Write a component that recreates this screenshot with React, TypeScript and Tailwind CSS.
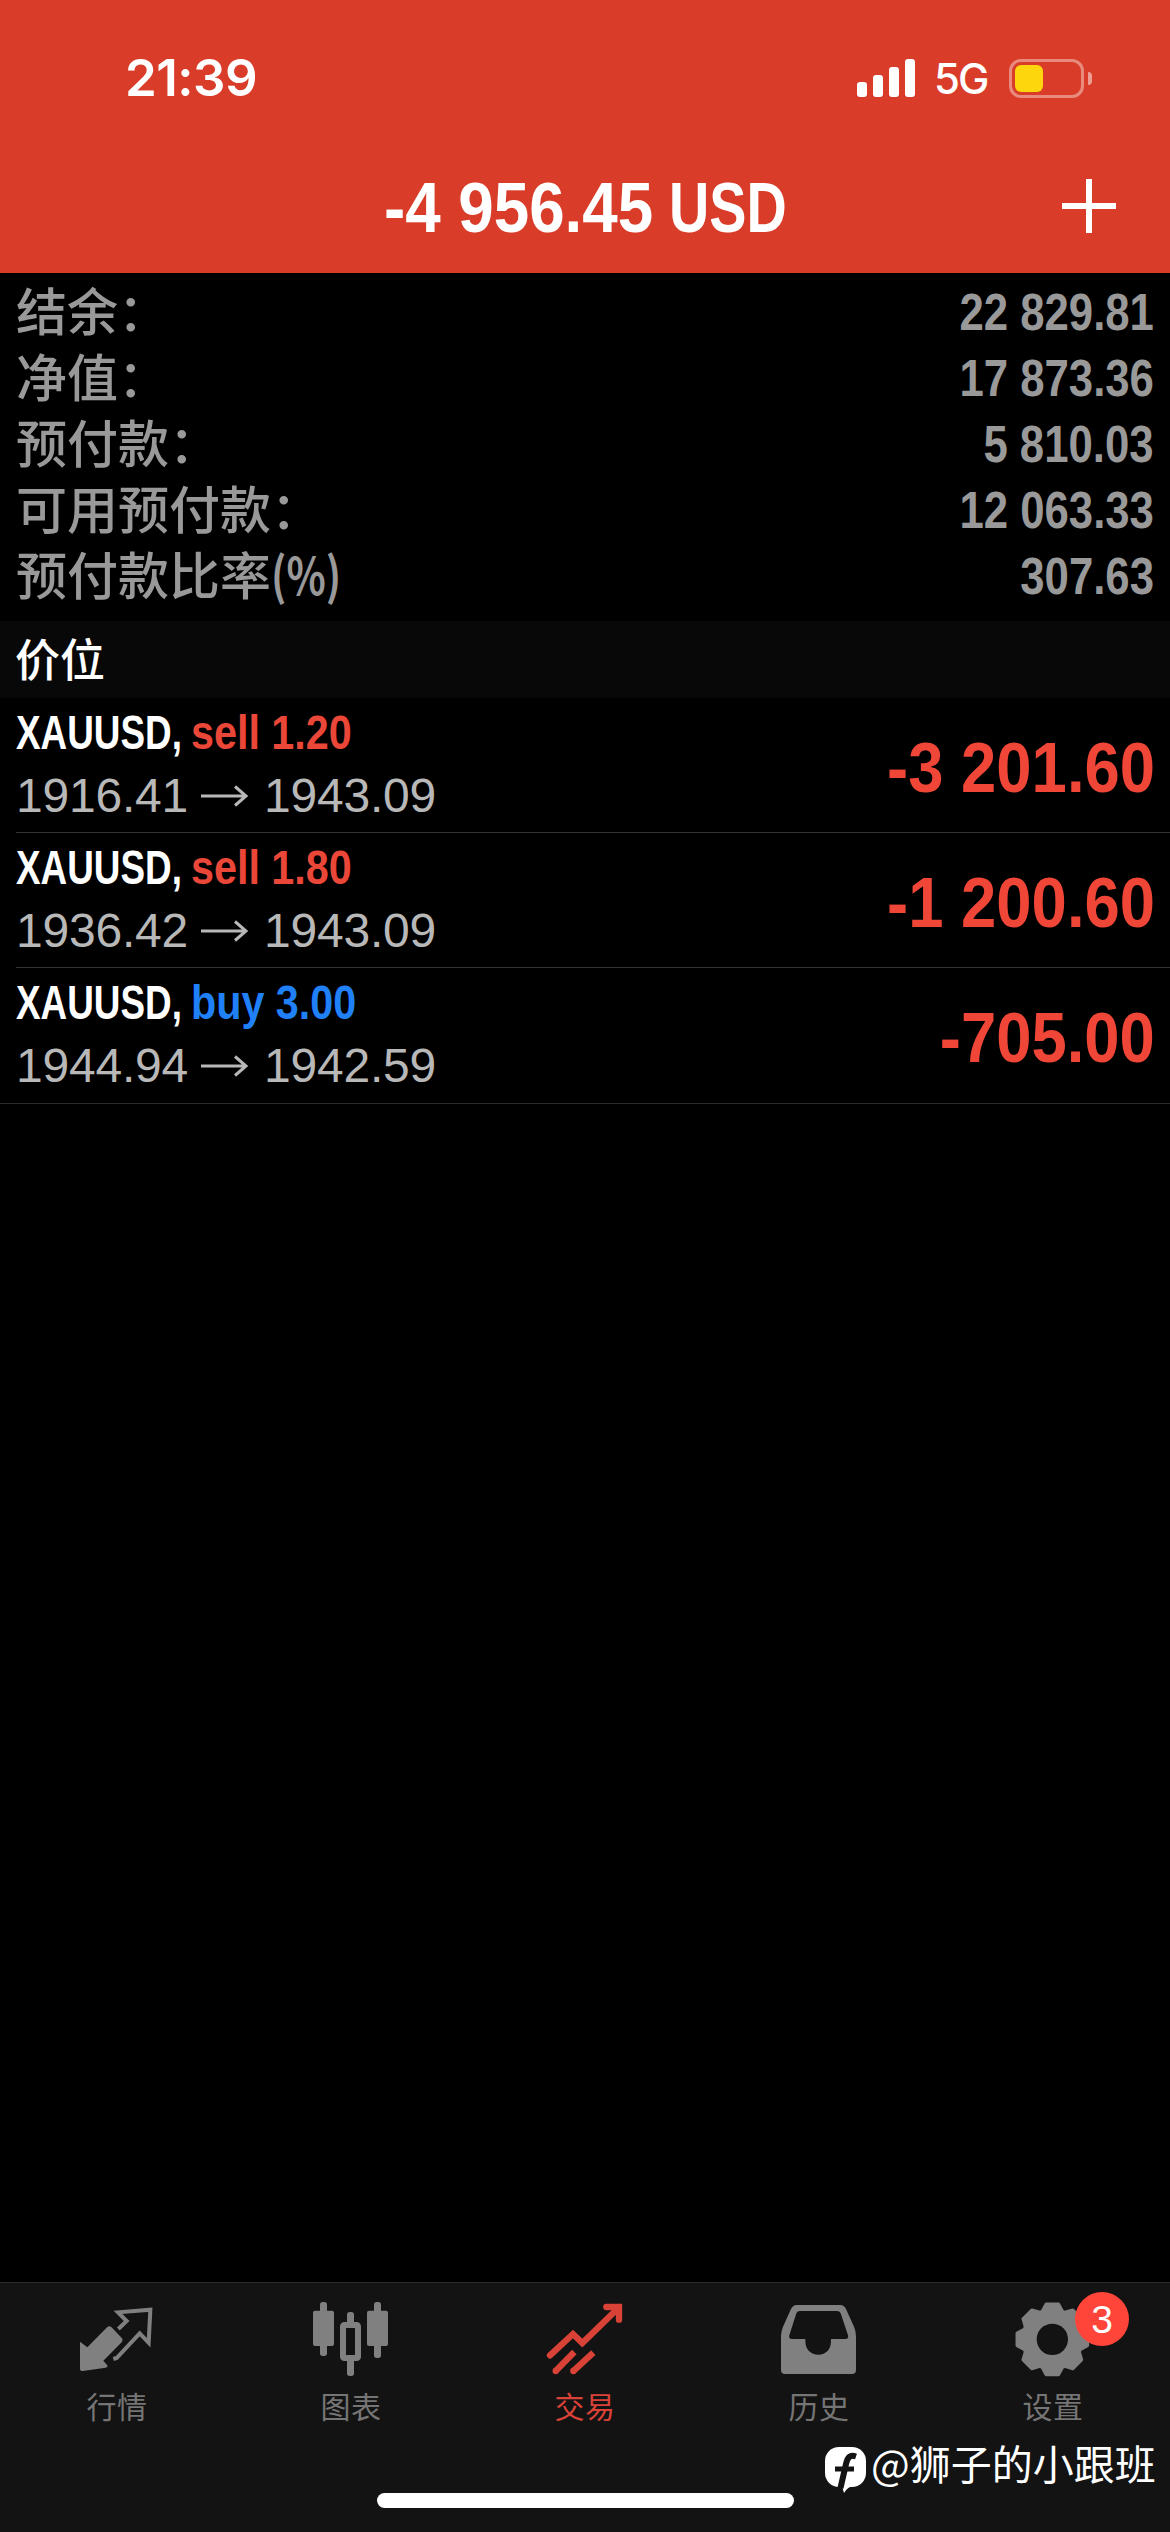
import type { ReactNode } from 'react';

const balances = [
  ['结余：', '22 829.81'],
  ['净值：', '17 873.36'],
  ['预付款：', '5 810.03'],
  ['可用预付款：', '12 063.33'],
  ['预付款比率', '307.63'],
];

const positions = [
  { side: 'sell 1.20', from: '1916.41', to: '1943.09', profit: '-3 201.60', buy: false },
  { side: 'sell 1.80', from: '1936.42', to: '1943.09', profit: '-1 200.60', buy: false },
  { side: 'buy 3.00', from: '1944.94', to: '1942.59', profit: '-705.00', buy: true },
];

const cjk = "font-['Noto_Sans_CJK_SC',sans-serif]";

function StatusBar() {
  return (
    <div className="flex h-[140px] items-start justify-between pl-[125px] pr-[78px] pt-[48px] text-white">
      <span className="block h-[60px] font-['Inter',sans-serif] text-[51px] font-semibold leading-[60px] tracking-[-0.5px]">21:39</span>
      <div className="flex h-[60px] items-center">
        <svg className="h-[38px] w-[58px]" viewBox="0 0 58 38" fill="#fff">
          <rect x="0" y="23" width="10" height="15" rx="3" />
          <rect x="16" y="16" width="10" height="22" rx="3" />
          <rect x="32" y="8" width="10" height="30" rx="3" />
          <rect x="48" y="0" width="10" height="38" rx="3" />
        </svg>
        <span className="ml-[19px] w-[75px] pt-[2px] font-['Inter',sans-serif] text-[42px] font-medium leading-[60px] tracking-[-2px]">5G</span>
        <div className="flex h-[39px] w-[75px] items-center rounded-[12px] border-[3px] border-white/40 pl-[3px]">
          <div className="h-[27px] w-[28px] rounded-[6px] bg-[#fdd60d]" />
        </div>
        <div className="ml-[4px] h-[13px] w-[4px] rounded-r-full bg-white/50" />
      </div>
    </div>
  );
}

function Header() {
  return (
    <header className="h-[273px] bg-[#d93d29]">
      <StatusBar />
      <div className="relative flex h-[133px] justify-center pt-[28px] font-['Liberation_Sans',sans-serif] text-[71px] font-bold leading-[80px] text-white">
        <h1 className="flex whitespace-pre">
          <span className="block w-[285px]"><span className="inline-block origin-left scale-x-[0.897]">-4 956.45</span></span>
          <span className="block w-[117px]"><span className="inline-block origin-left scale-x-[0.785]">USD</span></span>
        </h1>
        <svg className="absolute left-[1062px] top-[39px] h-[54px] w-[54px]" viewBox="0 0 54 54" stroke="#fff" strokeWidth="6">
          <path d="M27 0V54M0 27H54" />
        </svg>
      </div>
    </header>
  );
}

function Summary() {
  return (
    <section className="h-[348px] px-[16px] pt-[6px] text-[#999]">
      {balances.map(([label, value], i) => (
        <div key={label} className="flex h-[66px] items-start justify-between whitespace-nowrap">
          <span className={cjk + ' -mt-[3px] text-[51px] font-medium leading-[66px]'}>
            {label}
            {i === 4 && <span className="inline-block origin-left scale-x-[0.8] font-bold">(%)</span>}
          </span>
          <span className="origin-right scale-x-[0.857] font-['Liberation_Sans',sans-serif] text-[51px] font-bold leading-[67px]">{value}</span>
        </div>
      ))}
    </section>
  );
}

function Position({ p, last }: { p: (typeof positions)[number]; last: boolean }) {
  return (
    <div className={last ? 'h-[136px] border-b border-[#2c2c2c]' : 'h-[135px]'}>
      <div className={"ml-[16px] flex h-full justify-between pr-[15px] font-['Liberation_Sans',sans-serif]" + (last ? '' : ' border-b border-[#333]')}>
        <div>
          <div className="mt-[7px] flex h-[56px] whitespace-nowrap text-[48px] font-bold leading-[56px]">
            <span className="block w-[175px] text-white"><span className="inline-block origin-left scale-x-[0.768]">XAUUSD,</span></span>
            <span className={p.buy ? 'text-[#2080f8]' : 'text-[#ea4739]'}><span className="inline-block origin-left scale-x-[0.86]">{p.side}</span></span>
          </div>
          <div className="mt-[7px] flex h-[56px] items-center text-[48px] leading-[56px] text-[#b8b8b8]">
            <span className="w-[185px] tracking-[-0.2px]">{p.from}</span>
            <svg className="h-[22px] w-[47px]" viewBox="0 0 47 22" fill="none" stroke="#b8b8b8" strokeWidth="3">
              <path d="M0 11H45M34 1.500L45 11L34 20.500" />
            </svg>
            <span className="ml-[16px] tracking-[-0.2px]">{p.to}</span>
          </div>
        </div>
        <span className="mt-[30px] h-[80px] origin-right scale-x-[0.893] whitespace-nowrap text-[71px] font-bold leading-[80px] text-[#ef4637]">{p.profit}</span>
      </div>
    </div>
  );
}

const gearPoints = Array.from({ length: 8 }, (_, k) =>
  [[-20, 89], [-10, 107], [10, 107], [20, 89]].map(([a, r]) => {
    const t = ((k * 45 + a) * Math.PI) / 180;
    return (847 + r * Math.sin(t)).toFixed(1) + ',' + (208 - r * Math.cos(t)).toFixed(1);
  }).join(' ')
).join(' ');

function Tab({ label, viewBox, active, badge, children }: { label: string; viewBox: string; active?: boolean; badge?: string; children: ReactNode }) {
  return (
    <div className={'relative flex w-[234px] flex-col items-center pt-[17px] ' + (active ? 'text-[#d94237]' : 'text-[#808080]')}>
      <svg className="h-[80px] w-[80px]" viewBox={viewBox} fill="currentColor">{children}</svg>
      <span className={cjk + ' mt-[3px] text-[30px] leading-[44px] tracking-[0.5px] ' + (active ? '' : 'text-[#757575]')}>{label}</span>
      {badge && (
        <span className="absolute left-[139px] top-[9px] flex h-[54px] w-[54px] items-center justify-center rounded-full bg-[#ff4539] font-['Liberation_Sans',sans-serif] text-[39px] leading-none text-white">{badge}</span>
      )}
    </div>
  );
}

function TabBar() {
  return (
    <nav className="relative h-[250px] border-t border-[#2b2b2b] bg-[#131313]">
      <div className="flex">
        <Tab label="行情" viewBox="231 90 240 240">
          <path d="M240 215L262 232L322 171Q328 166 334 171L366 205Q371 211 365 217L310 272L323 287Q323 292 317 293L248 303Q240 303 240 296Z" />
          <path d="M355 177L380 153L354 127L451 119L446 218L419 190L350 264L340 267" fill="none" stroke="currentColor" strokeWidth="12" />
        </Tab>
        <Tab label="图表" viewBox="933 90 240 240">
          <rect x="939" y="122" width="63" height="106" rx="6" />
          <rect x="960" y="96" width="21" height="162" rx="8" />
          <rect x="1101" y="122" width="63" height="106" rx="6" />
          <rect x="1122" y="96" width="21" height="168" rx="8" />
          <rect x="1041" y="126" width="21" height="40" rx="8" />
          <rect x="1041" y="265" width="21" height="53" rx="8" />
          <rect x="1029" y="165" width="45" height="99" rx="4" fill="none" stroke="currentColor" strokeWidth="18" />
        </Tab>
        <Tab label="交易" viewBox="435 90 240 240" active>
          <g fill="none" stroke="currentColor" strokeWidth="19" strokeLinecap="round">
            <path d="M450 256L519 192L547 219L655 114" />
            <path d="M619 111H657V149" />
          </g>
          <g fill="none" stroke="currentColor" strokeWidth="19">
            <path d="M466 304L523 246M519 304L580 248" />
          </g>
          <circle cx="467" cy="303" r="9.500" />
          <circle cx="520" cy="303" r="9.500" />
        </Tab>
        <Tab label="历史" viewBox="27 90 240 240">
          <path fillRule="evenodd" d="M80 105H211Q222 105 228 117L252 170Q258 184 258 198V300Q258 312 246 312H45Q33 312 33 300V198Q33 184 39 170L63 117Q69 105 80 105ZM90 123Q82 123 79 130L58 196Q55 207 66 207H106V213C106 238 122 254 145 254S183 238 183 213V207H226Q237 207 234 196L212 130Q209 123 201 123Z" />
        </Tab>
        <Tab label="设置" viewBox="729 90 240 240" badge="3">
          <polygon points={gearPoints} stroke="currentColor" strokeWidth="10" strokeLinejoin="round" />
          <circle cx="847" cy="208" r="47" fill="#131313" />
        </Tab>
      </div>
      <div className="absolute left-[377px] top-[210px] h-[15px] w-[417px] rounded-full bg-white" />
      <div className="absolute left-[825px] top-[151px] flex h-[60px] text-white">
        <svg className="mt-[13px] h-[48px] w-[41px]" viewBox="0 0 41 48">
          <rect width="41" height="40" rx="14" fill="#fff" />
          <path d="M16 36L19 46Q22 40 32 37Z" fill="#fff" />
          <path d="M31 9.500C25 7.500 22.500 10 21 17L15.500 41" fill="none" stroke="#131313" strokeWidth="6" />
          <path d="M10 22H29" stroke="#131313" strokeWidth="5" />
        </svg>
        <span className={cjk + ' ml-[5px] whitespace-nowrap text-[41px] leading-[56px]'}>@狮子的小跟班</span>
      </div>
    </nav>
  );
}

export default function App() {
  return (
    <div className="flex h-[2532px] w-[1170px] flex-col overflow-hidden bg-black">
      <Header />
      <Summary />
      <h2 className={cjk + ' h-[77px] bg-[#080808] pl-[15px] text-[45px] font-medium leading-[74px] text-white'}>价位</h2>
      <main className="flex-1">
        {positions.map((p, i) => (
          <Position key={i} p={p} last={i === 2} />
        ))}
      </main>
      <TabBar />
    </div>
  );
}
